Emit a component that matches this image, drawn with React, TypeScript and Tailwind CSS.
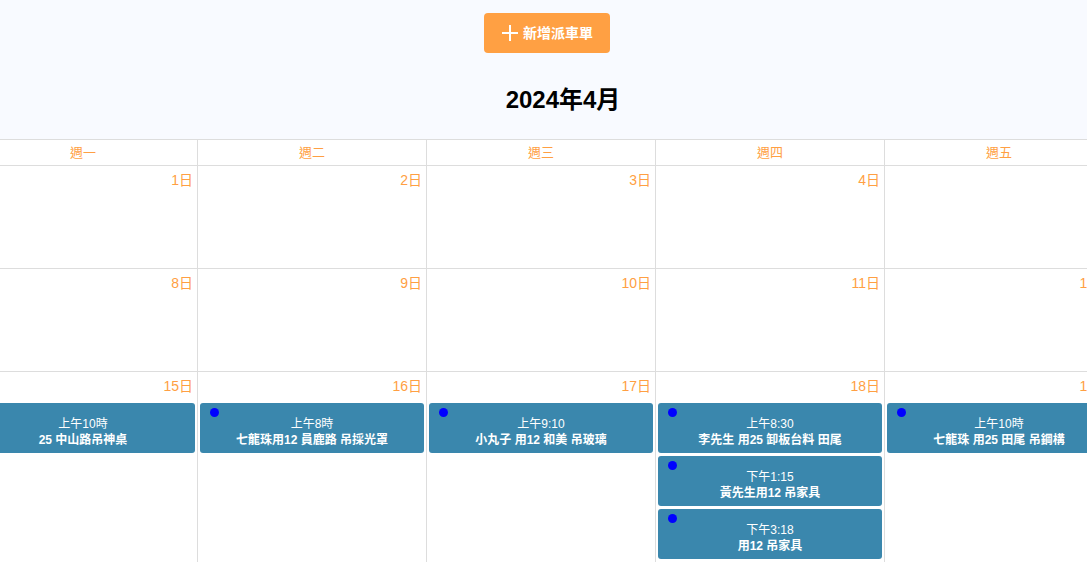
import React from 'react';

type CalEvent = { time: string; title: string };

const weekdays = ['週一', '週二', '週三', '週四', '週五'];

const weeks: number[][] = [
  [1, 2, 3, 4, 5],
  [8, 9, 10, 11, 12],
  [15, 16, 17, 18, 19],
];

const events: Record<number, CalEvent[]> = {
  15: [{ time: '上午10時', title: '25 中山路吊神桌' }],
  16: [{ time: '上午8時', title: '七龍珠用12 員鹿路 吊採光罩' }],
  17: [{ time: '上午9:10', title: '小丸子 用12 和美 吊玻璃' }],
  18: [
    { time: '上午8:30', title: '李先生 用25 卸板台料 田尾' },
    { time: '下午1:15', title: '黃先生用12 吊家具' },
    { time: '下午3:18', title: '用12 吊家具' },
  ],
  19: [{ time: '上午10時', title: '七龍珠 用25 田尾 吊鋼構' }],
};

const font = { fontFamily: '"Liberation Sans", "Noto Sans CJK TC", sans-serif' };

const EventCard: React.FC<{ ev: CalEvent }> = ({ ev }) => (
  <div className="relative mx-[2px] h-[50px] rounded-[3px] bg-[#3a87ad] pt-[13px] text-center text-[12px] leading-[16px] text-white">
    <span className="absolute left-[10px] top-[5px] size-[9px] rounded-full bg-[#0000ff]" />
    <div>{ev.time}</div>
    <div className="font-bold">{ev.title}</div>
  </div>
);

export default function App() {
  return (
    <div className="h-screen w-full overflow-hidden bg-white" style={font}>
      <div className="flex h-[139px] flex-col items-center bg-[#f8faff] pt-[13px]">
        <div className="pl-[7px]">
          <button className="flex h-[40px] w-[126px] items-center justify-center gap-[4px] rounded-[4px] bg-[#ffa043] text-[14px] font-bold text-white">
            <svg width="18" height="18" viewBox="0 0 18 18" fill="none" stroke="white" strokeWidth="2">
              <path d="M9 1v16M1 9h16" />
            </svg>
            新增派車單
          </button>
        </div>
        <h1 className="mt-[33px] pl-[39px] text-[24px] font-bold leading-[28px] text-black">2024年4月</h1>
      </div>

      <div className="ml-[-31px] w-[1145px]">
        <div className="grid grid-cols-5 border-y border-[#ddd]">
          {weekdays.map((d) => (
            <div key={d} className="h-[25px] border-r border-[#ddd] text-center text-[13px] leading-[25px] text-[#ff9f43]">
              {d}
            </div>
          ))}
        </div>
        {weeks.map((week, wi) => (
          <div key={wi} className="grid grid-cols-5 border-b border-[#ddd]">
            {week.map((day) => (
              <div key={day} className="flex min-h-[102px] flex-col border-r border-[#ddd] pb-[4px]">
                <div className="px-[4px] pt-[4px] text-right text-[14px] leading-[20px] text-[#ff9f43]">{day}日</div>
                <div className="mt-[7px] flex flex-col gap-[3px]">
                  {(events[day] || []).map((ev, i) => (
                    <EventCard key={i} ev={ev} />
                  ))}
                </div>
              </div>
            ))}
          </div>
        ))}
      </div>
    </div>
  );
}
